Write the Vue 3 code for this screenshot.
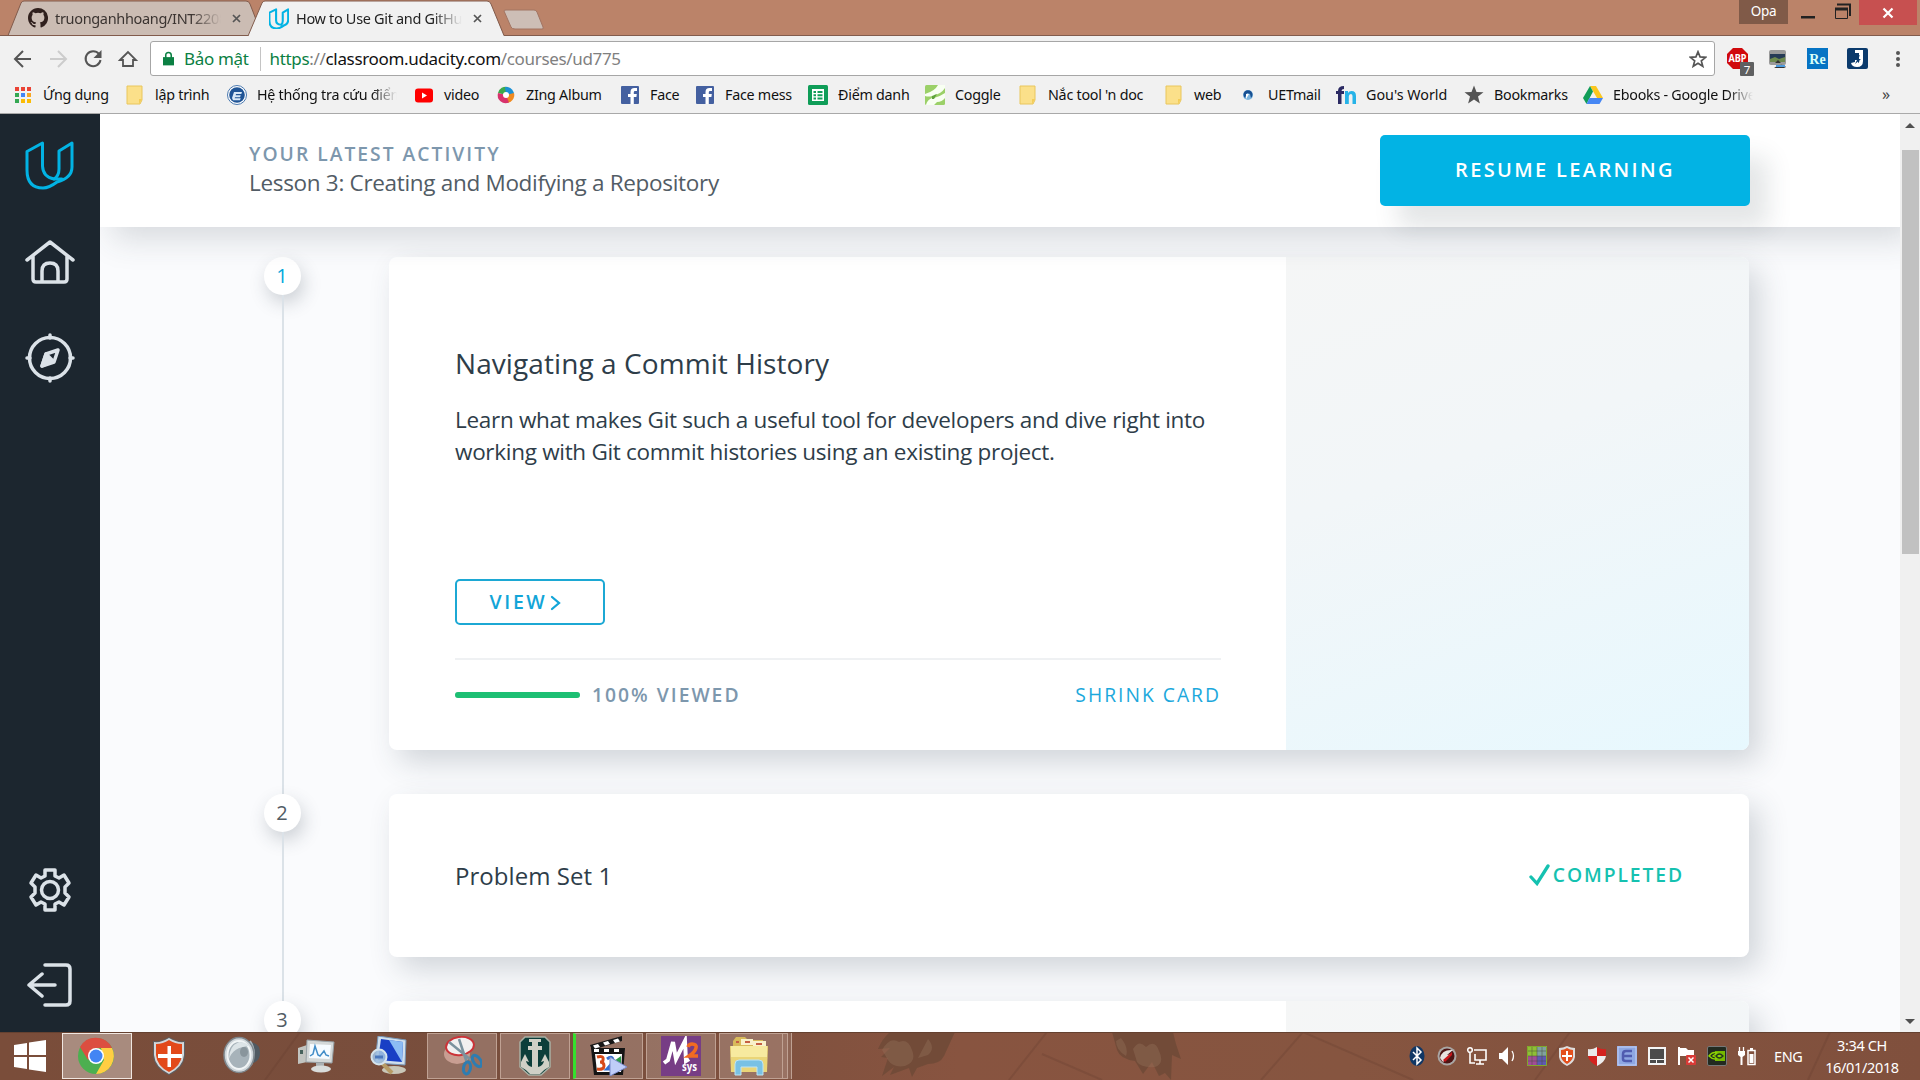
<script setup>
const folder = '<path d="M2 1h15v14l-2 4H2z" fill="#fbe08a" stroke="#e9c65c"/><path d="M14 19v-5h3z" fill="#f4cd58"/>'
const facebook = '<rect x="1" y="1" width="18" height="18" rx="1" fill="#4460a0"/><path d="M10.500 19v-7H8V9h2.500V7q0-4 4-4H17v3h-2q-1.200 0-1.200 1.200V9h3l-.4 3h-2.600v7z" fill="#fff"/>'
const dots = ['#ea4335', '#ea4335', '#ea4335', '#34a853', '#4285f4', '#f6a623', '#34a853', '#fbbc05', '#fbbc05']
  .map((c, i) => `<rect x="${2 + (i % 3) * 6}" y="${2 + Math.floor(i / 3) * 6}" width="4" height="4" fill="${c}"/>`)
  .join('')

const bookmarks = [
  { label: 'Ứng dụng', width: 112, icon: dots },
  { label: 'lập trình', width: 102, icon: folder },
  { label: 'Hệ thống tra cứu điểm', width: 187, fade: true, icon: '<circle cx="10" cy="10" r="9.500" fill="#fff" stroke="#4a79b0"/><circle cx="10" cy="10" r="7.800" fill="#1f5496"/><path d="M5 13l2-6h8l-.7 2H9l-.3 1.200h5l-.6 2H8l-.3 1h6l-.7 2H6z" fill="#d8e8f8"/>' },
  { label: 'video', width: 82, icon: '<rect x="1" y="3.500" width="18" height="14" rx="3" fill="#f00"/><path d="M8 7.500v6l5-3z" fill="#fff"/>' },
  { label: 'ZIng Album', width: 124, icon: '<path d="M10 10L2 8A8 8 0 0 1 12 2z" fill="#3ea94a"/><path d="M10 10L9 2a8 8 0 0 1 9 9z" fill="#1b91d6"/><path d="M10 10l8-2a8 8 0 0 1-8 10z" fill="#f08a20"/><path d="M10 10l3 7.500A8 8 0 0 1 2 8z" fill="#d8326c"/><circle cx="10" cy="10" r="3" fill="#fff"/>' },
  { label: 'Face', width: 75, icon: facebook },
  { label: 'Face mess', width: 113, icon: facebook },
  { label: 'Điểm danh', width: 117, icon: '<rect width="20" height="20" rx="1.500" fill="#0f9d58"/><path d="M4 4h12v12H4z" fill="#fff"/><path d="M5.500 6h2.500v2H5.500zm4 0h5v2h-5zM5.500 9.200h2.500v2H5.500zm4 0h5v2h-5zM5.500 12.400h2.500v2H5.500zm4 0h5v2h-5z" fill="#0f9d58"/>' },
  { label: 'Coggle', width: 93, icon: '<rect width="20" height="20" rx="1.500" fill="#9bd068"/><path d="M0 9Q10 6 13 0h7v3Q16 9 9 10v3q5-1 11-5v5q-3 4-8 4l-3 3H1q1-5 6-7v-2q-3 1-7 0z" fill="#f8fff2"/><path d="M7 11l5-2-3 5H7z" fill="#5fa33c"/>' },
  { label: "Nắc tool 'n doc", width: 146, icon: folder },
  { label: 'web', width: 74, icon: folder },
  { label: 'UETmail', width: 98, icon: '<circle cx="10" cy="10" r="5" fill="#7bb5df"/><path d="M7 13a4.500 4.500 0 1 1 6 0l-1-4-3-1z" fill="#174f91"/><path d="M8 14V9h3z" fill="#fff"/>' },
  { label: "Gou's World", width: 128, wide: true, icon: '<path d="M2 19V9H0V6h2q0-5 6-5v3Q5.500 4 5.500 6H8v3H5.500v10z" fill="#2b2a63"/><path d="M9 19V6h3v2q1-2 3.500-2Q20 6 20 11v8h-3.500v-8q0-2-1.700-2-2 0-2 2.500V19z" fill="#26b3e8"/>' },
  { label: 'Bookmarks', width: 119, icon: '<path d="M10 .5l2.500 6.500 7 .3-5.500 4.300 1.900 6.900-5.900-4-5.900 4 1.900-6.900L.5 7.300l7-.3z" fill="#545454"/>' },
  { label: 'Ebooks - Google Drive', width: 170, fade: true, icon: '<path d="M7 1h6l7 12h-6z" fill="#fbc71f"/><path d="M7 1l3 5.500L3.500 19 0 13z" fill="#109d58"/><path d="M6.500 13H20l-3.500 6h-13z" fill="#4687f4"/>' },
]

const extensions = [
  { name: 'abp', icon: '<path d="M6 0h9l6 6v9l-6 6H6l-6-6V6z" fill="#d0090c"/><text x="1.500" y="14" font-size="10" font-weight="700" fill="#fff" textLength="18" lengthAdjust="spacingAndGlyphs">ABP</text><rect x="13" y="14" width="14" height="14" rx="1" fill="#5f6061"/><text x="20" y="25.500" font-size="11.500" text-anchor="middle" fill="#fff">7</text>' },
  { name: 'capture', icon: '<rect x="2" y="2" width="17" height="15" rx="2" fill="#9a9a9a"/><path d="M3 6h15v8H3z" fill="#263b56"/><path d="M3 11l5-2 4 2 6-2v5H3z" fill="#6d8a4e"/><path d="M8 15l3-3 3 3zM7 20q8-6 12-1l-2 1z" fill="#333"/><path d="M9 18h9" stroke="#4c9ce0" stroke-width="2"/>' },
  { name: 're', icon: '<rect x="0" y="0" width="21" height="21" fill="#0674c4"/><text x="10.500" y="15.500" font-size="14" font-family="Liberation Serif" font-weight="700" text-anchor="middle" fill="#d8fff8">Re</text>' },
  { name: 'j', icon: '<rect x="0" y="0" width="21" height="21" rx="2" fill="#0b3a6c"/><path d="M8 2h8v11q0 6-6 6-5 0-6-4l4-1v-2l3-1v4q2-1 1-4V5H8z" fill="#fff"/><path d="M8 10l5-3-2 4h3l-6 5 2-4H7z" fill="#0b3a6c"/>' },
]

const lessons = [
  { number: 1, kind: 'expanded', title: 'Navigating a Commit History', text: 'Learn what makes Git such a useful tool for developers and dive right into working with Git commit histories using an existing project.', viewed: 100 },
  { number: 2, kind: 'compact', title: 'Problem Set 1' },
  { number: 3, kind: 'preview' },
]

const pinned = [
  { name: 'shield', icon: '<path d="M20 1q-8 5-16 4v14q1 13 16 20 15-7 16-20V5q-8 1-16-4z" fill="#5d6064"/><path d="M20 2q-8 5-15 4v13q1 12 15 19 14-7 15-19V6q-7 1-15-4z" fill="#d5d8da"/><path d="M20 4q-6 4-13 4v11q1 11 13 17 12-6 13-17V8q-7 0-13-4z" fill="#e2491a"/><path d="M18.500 10h3.500v8h11v4H22v9h-3.500v-9H9v-4h9.500z" fill="#fff"/>' },
  { name: 'volume', icon: '<path d="M19 2l13 5q6 2 6 10t-7 10l-12 9z" fill="#505a62"/><path d="M28 5q7 10 1 24" fill="none" stroke="#a9b5bb" stroke-width="2"/><ellipse cx="17" cy="19" rx="15" ry="17.500" fill="#cfd6da" stroke="#7e878d" stroke-width="1.500"/><ellipse cx="17" cy="19" rx="11.500" ry="14" fill="#a7b3ba" stroke="#f1f5f6" stroke-width="2"/><path d="M7 23q4-12 20-13-3-4-10-4-10 4-10 17z" fill="#dce4e7"/><ellipse cx="22" cy="16" rx="4" ry="5" fill="#89959c"/>' },
  { name: 'monitor', icon: '<path d="M2 12l9-3v17l-9 2z" fill="#c2c4c0"/><path d="M4 14h3v4H4z" fill="#46615b"/><path d="M11 4l27 2-2 21-26-1z" fill="#d4d8d8" stroke="#96a0a5"/><path d="M14 8l21 1-1.500 14L13 22z" fill="#f6fbff"/><path d="M14 20l3-2 2-8 3 9 2 1 4-5 2 4 3 1" fill="none" stroke="#428dc8" stroke-width="1.500"/><path d="M20 27h8v5h-8z" fill="#abb0b2"/><ellipse cx="25" cy="33" rx="10" ry="3.500" fill="#d9dcdb"/>' },
  { name: 'remote', icon: '<path d="M9 0l28 4-1 25-30-2z" fill="#d0e0ee" stroke="#7896b5"/><path d="M12 3l22 3-1 20-24-2z" fill="#183fc5"/><path d="M20 4l14 2-1 20z" fill="#8cbcf4"/><ellipse cx="25" cy="34" rx="12" ry="4" fill="#c9c7b8"/><path d="M11 25l12 12" stroke="#b79c66" stroke-width="4"/><circle cx="10" cy="21" r="7.500" fill="#9fbfe0" fill-opacity=".9" stroke="#d6e4ec" stroke-width="2"/><path d="M6 21h8" stroke="#4b78bd" stroke-width="3"/>' },
]

const windows = [
  { name: 'snip', icon: '<ellipse cx="15" cy="18" rx="13" ry="10" fill="#c89e92"/><ellipse cx="18" cy="10" rx="14" ry="9" fill="#f1f0f0" stroke="#cb3338" stroke-width="2" transform="rotate(-8 18 10)"/><path d="M7 6l22 18M17 3l8 24" stroke="#7b929e" stroke-width="2.500"/><ellipse cx="35" cy="25" rx="3.500" ry="6.500" transform="rotate(-35 35 25)" fill="none" stroke="#2d7db2" stroke-width="3"/><ellipse cx="25" cy="32" rx="3.500" ry="6" transform="rotate(10 25 32)" fill="none" stroke="#2d7db2" stroke-width="3"/>' },
  { name: 'anchor', icon: '<path d="M10 1h20l5 5v25l-9 8H14l-9-8V6z" fill="#0c3e3a" stroke="#a9b0a4" stroke-width="1.500"/><path d="M14 3h12v3h-3v4h4v4h-4v17q5-1 6-6l-3 1 4-8 4 8v5q-6 3-9 7h-10q-3-4-9-7v-5l4-8 4 8-3-1q1 5 6 6V14h-4v-4h4V6h-3z" fill="#cfd0c6"/>' },
  { name: 'player', active: true, icon: '<path d="M2 12h34l-2 27H5z" fill="#151515"/><path d="M6 18h27l-1 18H8z" fill="#fff"/><path d="M1 9L33 0v5L3 14z" fill="#181818"/><path d="M4 9.500l5-1.500 2 3-5 1.500zM14 6.500l5-1.500 2 3-5 1.500zM24 4l5-1.500 2 3L26 7zM5 13h5v3H5zm10 0h5v3h-5zm10 0h5v3h-5z" fill="#fff"/><path d="M8 21q7-2 6 3 0 2-3 2 4 0 4 4 0 4-7 3" fill="none" stroke="#d74a19" stroke-width="3"/><path d="M18 23q5-4 6 1 0 3-6 9h7" fill="none" stroke="#356fd0" stroke-width="3"/><path d="M25 25l7-5v10z" fill="#2a9b47"/><path d="M21 21l17 10-17 9z" fill="#bfcdf8" stroke="#7c8bc9"/>' },
  { name: 'm2', icon: '<rect width="40" height="40" fill="#773d85"/><path d="M3 27l4-3 5-18 3 17L24 5l1 20 3-2" fill="none" stroke="#fff" stroke-width="4"/><path d="M27 11q1-3 4-3 5 0 4 4-1 4-7 8h9" fill="none" stroke="#f26b21" stroke-width="3.500"/><text x="21" y="35" font-size="12" font-weight="700" fill="#fff" textLength="15" lengthAdjust="spacingAndGlyphs">sys</text>' },
  { name: 'explorer', stacked: true, icon: '<path d="M4 5l3-4h9l3 3h15v8H4z" fill="#d8ba5a"/><path d="M12 3h12v6H12zm12 2h13v5H24z" fill="#f9f1ca"/><path d="M7 6h3m6 0h5m6 2h6" stroke="#c65f43" stroke-width="2"/><path d="M1 10h38l-1 26H2z" fill="#ead577"/><path d="M2 10h36v11H2z" fill="#f7ea9f"/><path d="M6 39V28q0-4 4-4h20q4 0 4 4v11h-6v-8H12v8z" fill="#79c1e4" stroke="#bfe4f4"/>' },
]

const tray = [
  '<ellipse cx="10" cy="10" rx="7.500" ry="10" fill="#103765"/><path d="M6 6l8 8-4 4V2l4 4-8 8" fill="none" stroke="#fff" stroke-width="1.500"/>',
  '<circle cx="10" cy="10" r="9.500" fill="#a9a6a4"/><circle cx="10" cy="10" r="7.500" fill="#4d1514"/><path d="M3 12Q5 3 16 4l-6 5 5-1-9 8z" fill="#e8e2e0"/><path d="M6 14L15 6v3l-7 7z" fill="#c8171c"/>',
  '<path d="M7 4h12v10H8V8M13 14v4m-4 0h8M3 7v10h5" fill="none" stroke="#fff" stroke-width="1.600"/><circle cx="3" cy="4" r="2.300" fill="none" stroke="#fff" stroke-width="1.500"/>',
  '<path d="M2 7h3l6-6v18l-6-6H2z" fill="#fff"/><path d="M15 5q3 5 0 10" fill="none" stroke="#fff" stroke-width="1.300"/>',
  '<path d="M0 0h10v10H0z" fill="#8fbf35"/><path d="M10 0h10v10H10z" fill="#7fa1a0"/><path d="M0 10h10v10H0z" fill="#a14d96"/><path d="M10 10h10v10H10z" fill="#5e59b5"/><path d="M0 5h20M0 10h20M0 15h20M5 0v20M10 0v20M15 0v20" stroke="#4d4d3e" stroke-width=".5"/><path d="M.5.5h19v19H.5z" fill="none" stroke="#7fa82c"/>',
  '<path d="M10 0Q6 2 2 2v9q1 6 8 9 7-3 8-9V2q-4 0-8-2z" fill="#ddd"/><path d="M10 2Q7 4 4 4v7q1 4 6 7 5-3 6-7V4q-3 0-6-2z" fill="#e4501d"/><path d="M9 5h2v4h4v2h-4v4H9v-4H5V9h4z" fill="#fff"/>',
  '<path d="M10 1Q5 4 1 3v7h9z" fill="#e9e9e9"/><path d="M10 1q5 3 9 2v7h-9z" fill="#d4231f"/><path d="M1 10q1 6 9 10V10z" fill="#d4231f"/><path d="M19 10q-1 6-9 10V10z" fill="#eee"/>',
  '<rect width="20" height="20" fill="#8ea7e3"/><rect x="1" y="1" width="18" height="18" fill="none" stroke="#c1cff4"/><path d="M15 5H9q-3 0-3 3v5q0 2 3 2h6M6 10h9" fill="none" stroke="#505cb0" stroke-width="2.500"/>',
  '<rect x="1" y="1" width="18" height="18" fill="#f4f4f4"/><path d="M3 3h14v10H3zm0 11h6v3H3zm7 0h7v3h-7z" fill="#4c4b4b"/>',
  '<path d="M2 1v18" stroke="#fff" stroke-width="2"/><path d="M3 2h6l2 2h6v8h-6L9 10H3z" fill="#fff"/><rect x="9" y="9" width="10" height="10" rx="1" fill="#d93b37"/><path d="M11.500 11.500l5 5m0-5l-5 5" stroke="#fff" stroke-width="1.500"/>',
  '<rect x=".5" y=".5" width="19" height="19" rx="1.500" fill="#222a20" stroke="#777"/><path d="M8 5h10v10H8z" fill="#76b900"/><path d="M2 10q5-7 12 0-6 6-12 0zm4 0q3-3 6 0-3 2-6 0z" fill="none" stroke="#8dd600" stroke-width="1.500"/><path d="M9 10q3-4 7 0-4 4-7 0z" fill="none" stroke="#24371b" stroke-width="1.300"/>',
  '<path d="M11 4.500h7v14h-7z" fill="none" stroke="#fff" stroke-width="1.500"/><path d="M12.500 8h4v9h-4zM13 2h3v2h-3z" fill="#fff"/><path d="M2.500 1v5m4-5v5" stroke="#fff" stroke-width="1.300"/><path d="M1 5h7v4l-2.500 2v8h-2v-8L1 9z" fill="#fff"/>',
]
</script>

<template>
  <div class="screen">
    <header class="browser">
      <div class="tabstrip">
        <svg class="tab-shapes" width="560" height="36" viewBox="0 0 560 36">
          <path d="M0 35.500h8L21 3q1-2 3-2h222q3 0 4 3l7 18-6 13.500z" fill="#cbbcb3" stroke="#815b4c" />
          <path d="M248 36l14-33q1-2 3-2h222q3 0 4 3l13 32z" fill="#f1f1f1" />
          <path d="M248 36l14-33q1-2 3-2h222q3 0 4 3l13 31.500h60" fill="none" stroke="#815b4c" />
          <path d="M504 11q0-1 2-1h28q2 0 3 2l6 15q1 2-1 2h-27q-3 0-4-2z" fill="#cdbeb6" stroke="#a27462" />
        </svg>
        <div class="tab first">
          <svg width="20" height="20" viewBox="0 0 16 16"><path fill="#30201d" d="M8 0C3.580 0 0 3.580 0 8c0 3.540 2.290 6.530 5.470 7.590.4.070.55-.17.55-.38v-1.490c-2.230.48-2.700-.94-2.700-.94-.36-.92-.89-1.170-.89-1.170-.73-.5.050-.49.050-.49.8.060 1.230.83 1.230.83.72 1.230 1.880.87 2.340.66.070-.52.280-.87.500-1.070-1.780-.2-3.640-.89-3.640-3.950 0-.87.310-1.590.82-2.150-.08-.2-.36-1.020.080-2.120 0 0 .67-.21 2.200.82a7.600 7.600 0 0 1 4 0c1.530-1.040 2.200-.82 2.200-.82.440 1.100.16 1.920.080 2.120.51.560.82 1.270.82 2.150 0 3.070-1.870 3.750-3.650 3.950.29.250.54.730.54 1.480v2.190c0 .21.150.46.550.38A8 8 0 0 0 8 0z" /></svg>
          <span class="tab-title">truonganhhoang/INT2208</span>
          <svg class="close" width="9" height="9" viewBox="0 0 9 9"><path d="M1 1l7 7m0-7L1 8" /></svg>
        </div>
        <div class="tab second">
          <svg width="20" height="21" viewBox="0 0 48 48"><path class="udacity heavy" d="M17 2v26q0 10 12 11 4-3 4-9V10L46 2v25q0 10-9 13-10 8-19 8Q1 47 1 30V10L17 2z" /></svg>
          <span class="tab-title">How to Use Git and GitHub</span>
          <svg class="close" width="9" height="9" viewBox="0 0 9 9"><path d="M1 1l7 7m0-7L1 8" /></svg>
        </div>
        <div class="window-controls">
          <span class="profile">Opa</span>
          <svg class="controls" width="71" height="24" viewBox="0 0 71 24"><path d="M13 16h14v2.500H13z" fill="#222" /><path d="M47.500 8.500h12v10h-12z" fill="none" stroke="#222" /><path d="M47 7.500h13v3H47z" fill="#222" /><path d="M49 4.500h13V16" fill="none" stroke="#222" stroke-width="2" /></svg>
          <span class="window-close"><svg width="12" height="12" viewBox="0 0 12 12"><path d="M1.500 1.500l9 9m0-9l-9 9" stroke="#fff" stroke-width="2.200" /></svg></span>
        </div>
      </div>

      <div class="toolbar">
        <svg class="nav" width="150" height="42" viewBox="0 0 150 42">
          <g fill="none" stroke="#555" stroke-width="2">
            <path d="M31 23H16m7-8l-8 8 8 8" />
            <path d="M50 23h15m-7-8l8 8-8 8" stroke="#ccc" />
            <path d="M99 18a7.500 7.500 0 1 0 1.500 6" />
            <path d="M120 24l8-8 8 8h-3v6h-10v-6z" stroke-width="1.800" />
          </g>
          <path d="M101.500 14v8h-8z" fill="#555" />
        </svg>
        <div class="omnibox">
          <svg width="11" height="15" viewBox="0 0 12 15"><path d="M0 6h12v9H0z" fill="#0b8043" /><path d="M3 7V4q0-3 3-3t3 3v3" fill="none" stroke="#0b8043" stroke-width="1.700" /></svg>
          <span class="secure">Bảo mật</span>
          <span class="url"><b>https</b>://<i>classroom.udacity.com</i>/courses/ud775</span>
          <svg class="star" width="18" height="18" viewBox="0 0 20 20"><path d="M10 2l2.300 5.700 6.200.4-4.800 4 1.600 6L10 14.700 4.700 18.100l1.600-6-4.800-4 6.200-.4z" fill="none" stroke="#555" stroke-width="1.900" /></svg>
        </div>
        <div class="extensions">
          <svg v-for="item in extensions" :key="item.name" width="28" height="28" viewBox="0 0 28 28" v-html="item.icon" />
          <svg class="menu" width="6" height="20" viewBox="0 0 6 20"><circle cx="3" cy="4" r="2" /><circle cx="3" cy="10" r="2" /><circle cx="3" cy="16" r="2" /></svg>
        </div>
      </div>

      <nav class="bookmarks">
        <div v-for="item in bookmarks" :key="item.label" class="bookmark" :class="{ wide: item.wide }" :style="{ width: item.width + 'px' }">
          <svg width="20" height="20" viewBox="0 0 20 20" v-html="item.icon" />
          <span :class="{ fade: item.fade }">{{ item.label }}</span>
        </div>
        <span class="more">»</span>
      </nav>
    </header>

    <div class="viewport">
      <aside class="sidebar">
        <svg class="logo" width="50" height="50" viewBox="0 0 50 50"><path class="udacity" d="M17.500 2L2 10.500V29q0 18 16 18 6 0 14-6 15-4 15-15V2L34 10v18q0 7-5 10-11-2-11.500-13z" /><path class="udacity" d="M29 38q5 0 8 0" /></svg>
        <svg class="home" width="50" height="44" viewBox="0 0 50 44"><path d="M2 20L25 2l23 18M8 16v23q0 3 3 3h28q3 0 3-3V16M17 41V31q0-8 8-8t8 8v10" /></svg>
        <svg class="compass" width="50" height="50" viewBox="0 0 50 50"><circle cx="25" cy="25" r="20.500" /><path d="M25 2v3m0 40v3M2 25h3m40 0h3" /><path d="M17 33l4-12 12-4-4 12z" /><path d="M17 33l4-12 7 7z" class="solid" /></svg>
        <span class="spacer"></span>
        <svg class="gear" width="44" height="44" viewBox="0 0 44 44"><circle cx="22" cy="22" r="8.500" /><path d="M17 2h10v6l4 2 5-3 5 8-4 4v6l4 4-5 8-5-3-4 2v6H17v-6l-4-2-5 3-5-8 4-4v-6l-4-4 5-8 5 3 4-2z" /></svg>
        <svg class="logout" width="46" height="46" viewBox="0 0 46 46"><path d="M18 3h21q4 0 4 4v32q0 4-4 4H18M28 23H2m13-11L2 23l13 11" /></svg>
      </aside>

      <main class="content">
        <section class="activity">
          <div class="latest">
            <p class="eyebrow">Your latest activity</p>
            <p class="lesson">Lesson 3: Creating and Modifying a Repository</p>
          </div>
          <button class="resume">Resume Learning</button>
        </section>

        <section class="timeline">
          <article v-for="lesson in lessons" :key="lesson.number" class="row">
            <div class="rail">
              <span class="step" :class="{ current: lesson.number === 1 }">{{ lesson.number }}</span>
              <span class="line"></span>
            </div>
            <div class="card" :class="lesson.kind">
              <template v-if="lesson.kind === 'expanded'">
                <div class="details">
                  <h2>{{ lesson.title }}</h2>
                  <p class="summary">{{ lesson.text }}</p>
                  <button class="view">View<svg width="12" height="16" viewBox="0 0 12 16"><path d="M2 2l7 6-7 6" fill="none" stroke="currentColor" stroke-width="2.300" stroke-linecap="round" /></svg></button>
                  <footer>
                    <span class="track"><span class="bar" :style="{ width: lesson.viewed + '%' }"></span></span>
                    <span class="viewed">{{ lesson.viewed }}% viewed</span>
                    <a class="shrink">Shrink card</a>
                  </footer>
                </div>
                <div class="art"></div>
              </template>
              <template v-else-if="lesson.kind === 'compact'">
                <h3>{{ lesson.title }}</h3>
                <span class="completed"><svg width="22" height="22" viewBox="0 0 22 22"><path d="M3 13l6 6.500L20 2" fill="none" stroke="currentColor" stroke-width="3.300" stroke-linecap="round" /></svg>Completed</span>
              </template>
              <template v-else>
                <div class="details"></div>
                <div class="art"></div>
              </template>
            </div>
          </article>
        </section>
      </main>

      <div class="scrollbar">
        <svg width="10" height="6" viewBox="0 0 10 6"><path d="M0 6l5-5 5 5z" /></svg>
        <span class="thumb"></span>
        <svg class="down" width="10" height="6" viewBox="0 0 10 6"><path d="M0 0l5 5 5-5z" /></svg>
      </div>
    </div>

    <footer class="taskbar">
      <svg class="wallpaper" width="1920" height="48" viewBox="0 0 1920 48">
        <g fill="none" stroke="#663c2e" stroke-opacity=".28" stroke-width="2"><path d="M300 0l-35 48M1047 0l-38 48M1042 22l60 26M1303 0l-42 48M1303 0l110 48M1570 0l-35 48M1830 0l-22 48" /></g>
        <g fill="#6f4a37" fill-opacity=".85"><path d="M890 0h65l-11 24q-4 8-16 8l-11 4-5 9-3-9-19 7 4-8-12 9 6-18-7-1 9-9-12 1q4-10 12-17z" /><path d="M1112 0h61l3 12 5 15-9-4-1 25-6-7-6 3-7-14-9 12-8-13q-15-2-18-11z" /></g>
        <g fill="#94705b" fill-opacity=".4"><path d="M882 18q8-14 17-8 9-4 13 8 5 12-7 16-12 2-17-6zM928 7q8 9 0 16l-10 3zM1121 6q8 10 5 18-10-6-10-15zM1133 17q6-10 13-2 9-8 13 4 6 12-4 16-14 1-18-5z" /></g>
        <path d="M0 .5h1920" stroke="#654130" />
      </svg>
      <svg class="start" width="34" height="34" viewBox="0 0 34 34"><path d="M1 6l13-2v12H1zM16 3.500L33 1v15H16zM1 18h13v12L1 28zM16 18h17v15l-17-2.500z" fill="#fff" /></svg>
      <span class="task chrome"><svg width="38" height="38" viewBox="0 0 38 38"><circle cx="19" cy="19" r="18" fill="#4caf50" /><path d="M3 10a18 18 0 0 1 32 1H19l-8 12z" fill="#dc4e40" /><path d="M35 11a18 18 0 0 1-16 26l8-14-3-12z" fill="#ffce43" /><circle cx="19" cy="19" r="8" fill="#fff" /><circle cx="19" cy="19" r="6.500" fill="#4285f4" /></svg></span>
      <span v-for="item in pinned" :key="item.name" class="pinned"><svg width="40" height="40" viewBox="0 0 40 40" v-html="item.icon" /></span>
      <span v-for="item in windows" :key="item.name" class="task" :class="{ active: item.active, stacked: item.stacked }"><svg width="40" height="40" viewBox="0 0 40 40" v-html="item.icon" /></span>
      <div class="tray">
        <svg v-for="(icon, index) in tray" :key="index" width="20" height="20" viewBox="0 0 20 20" v-html="icon" />
        <span class="language">ENG</span>
        <div class="clock"><span>3:34 CH</span><span>16/01/2018</span></div>
      </div>
    </footer>
  </div>
</template>

<style>
html,
body {
  overflow: hidden;
}
</style>

<style scoped>
* {
  box-sizing: border-box;
}

p,
h2,
h3 {
  margin: 0;
  font-weight: 400;
}

svg {
  flex: none;
}

.screen {
  display: flex;
  flex-direction: column;
  width: 1920px;
  height: 1080px;
  overflow: hidden;
  font-family: 'Open Sans', 'Noto Sans', sans-serif;
}

.browser {
  flex: none;
  height: 114px;
  background: #f1f1f1;
  border-bottom: 1px solid #a9a9a9;
  font-family: 'Noto Sans', 'Open Sans', sans-serif;
}

.tabstrip {
  position: relative;
  display: flex;
  height: 36px;
  background: #bb8369;
  border-bottom: 1px solid #815b4c;
}

.tab-shapes {
  position: absolute;
  left: 0;
  top: 0;
}

.tab {
  position: relative;
  display: flex;
  align-items: center;
  height: 36px;
  font-size: 14.5px;
  letter-spacing: -0.33px;
}

.first {
  width: 241px;
  margin-left: 28px;
  color: #3b3431;
}

.second {
  width: 235px;
  color: #222;
}

.tab-title {
  width: 166px;
  margin: 0 11px 0 7px;
  overflow: hidden;
  white-space: nowrap;
  -webkit-mask-image: linear-gradient(90deg, #000 82%, transparent);
  mask-image: linear-gradient(90deg, #000 82%, transparent);
}

.close {
  fill: none;
  stroke: #555;
  stroke-width: 1.7;
}

.udacity {
  fill: none;
  stroke: #02b3e4;
  stroke-width: 3;
  stroke-linejoin: round;
}

.heavy {
  stroke-width: 5;
}

.sidebar .udacity {
  stroke: #02b3e4;
  stroke-width: 3;
}

.window-controls {
  display: flex;
  margin-left: auto;
  padding-right: 3px;
}

.profile {
  width: 49px;
  height: 24px;
  background: #805a48;
  color: #fff;
  font-size: 13.5px;
  line-height: 23px;
  text-align: center;
  letter-spacing: -0.3px;
}

.window-close {
  display: flex;
  align-items: center;
  justify-content: center;
  width: 58px;
  height: 25px;
  background: #c75050;
}

.toolbar {
  display: flex;
  align-items: flex-start;
  height: 42px;
}

.omnibox {
  display: flex;
  align-items: center;
  width: 1565px;
  height: 35px;
  margin-top: 5px;
  padding: 0 7px 0 12px;
  background: #fff;
  border: 1px solid #a6a6a6;
  border-radius: 3px;
  font-size: 17px;
  letter-spacing: -0.33px;
}

.secure {
  margin-left: 10px;
  padding-right: 11px;
  border-right: 1px solid #c4c4c4;
  color: #0b8043;
  line-height: 24px;
}

.url {
  margin-left: 9px;
  color: #808080;
}

.url b {
  color: #0b8043;
  font-weight: 400;
}

.url i {
  color: #111;
  font-style: normal;
}

.star {
  margin-left: auto;
}

.extensions {
  display: flex;
  gap: 12px;
  padding: 12px 0 0 12px;
}

.menu {
  margin: 1px 0 0 8px;
  fill: #555;
}

.bookmarks {
  display: flex;
  align-items: center;
  height: 34px;
  padding-left: 13px;
}

.bookmark {
  display: flex;
  flex: none;
  align-items: center;
  gap: 10px;
  color: #111;
  font-size: 14.3px;
  line-height: 20px;
  letter-spacing: -0.25px;
  white-space: nowrap;
}

.bookmark span {
  margin-top: -1px;
}

.wide {
  letter-spacing: 0;
}

.fade {
  width: 140px;
  overflow: hidden;
  -webkit-mask-image: linear-gradient(90deg, #000 82%, transparent);
  mask-image: linear-gradient(90deg, #000 82%, transparent);
}

.more {
  margin-top: -3px;
  margin-left: 129px;
  color: #444;
  font-size: 16px;
}

.viewport {
  display: flex;
  flex: 1;
  min-height: 0;
}

.sidebar {
  display: flex;
  flex: none;
  flex-direction: column;
  align-items: center;
  width: 100px;
  padding: 27px 0 24px;
  background: #1c262f;
}

.sidebar svg {
  fill: none;
  stroke: #dbe2e8;
  stroke-width: 3.5;
  stroke-linecap: round;
  stroke-linejoin: round;
}

.sidebar .home {
  margin-top: 49px;
}

.sidebar .compass {
  margin-top: 49px;
}

.sidebar .solid {
  fill: #dbe2e8;
}

.spacer {
  flex: 1;
}

.sidebar .logout {
  margin-top: 50px;
}

.content {
  display: flex;
  flex: 1;
  flex-direction: column;
  min-width: 0;
  overflow: hidden;
  background: #fafbfd;
}

.activity {
  z-index: 0;
  display: flex;
  flex: none;
  align-items: flex-start;
  justify-content: space-between;
  height: 113px;
  padding: 21px 150px 0 149px;
  background: #fff;
  box-shadow: 12px 12px 30px rgba(46, 61, 73, 0.17);
}

.latest {
  padding-top: 5px;
}

.eyebrow {
  color: #7d97ad;
  font-size: 19.3px;
  font-weight: 600;
  line-height: 27px;
  letter-spacing: 2px;
  text-transform: uppercase;
}

.lesson {
  margin-top: 1px;
  color: #525c65;
  font-size: 22.5px;
  line-height: 30px;
  letter-spacing: -0.31px;
}

button {
  font-family: inherit;
  font-weight: 600;
  text-transform: uppercase;
}

.resume {
  width: 370px;
  height: 71px;
  padding: 0 0 2px;
  background: #02b3e4;
  border: 0;
  border-radius: 5px;
  box-shadow: 18px 22px 25px rgba(46, 61, 73, 0.13);
  color: #fff;
  font-size: 20px;
  letter-spacing: 2.35px;
}

.timeline {
  display: flex;
  flex-direction: column;
  padding: 30px 151px 0 163px;
}

.row {
  display: flex;
  gap: 88px;
}

.rail {
  display: flex;
  flex: none;
  flex-direction: column;
  align-items: center;
  width: 38px;
}

.step {
  width: 37px;
  height: 38px;
  background: #fff;
  border-radius: 50%;
  box-shadow: 3px 8px 18px rgba(46, 61, 73, 0.22);
  color: #525c65;
  font-size: 20px;
  font-weight: 500;
  line-height: 38px;
  text-align: center;
}

.current {
  color: #02a8dc;
}

.line {
  flex: 1;
  width: 2px;
  margin-left: 2px;
  background: #dbe2e8;
}

.card {
  display: flex;
  flex: 1;
  margin-bottom: 44px;
  background: #fff;
  border-radius: 8px;
  box-shadow: 10px 12px 30px rgba(46, 61, 73, 0.2);
}

.expanded {
  height: 493px;
}

.compact {
  align-items: center;
  justify-content: space-between;
  height: 163px;
  padding: 0 65px 0 66px;
}

.preview {
  height: 493px;
}

.details {
  display: flex;
  flex-direction: column;
  align-items: flex-start;
  width: 897px;
  padding: 86px 65px 0 66px;
}

.art {
  flex: 1;
  background: linear-gradient(160deg, #f5f6f6 0%, #f2f6f8 40%, #e7f8fe 100%);
  border-radius: 0 8px 8px 0;
}

h2 {
  color: #2e3d49;
  font-size: 28px;
  line-height: 40px;
  letter-spacing: 0.08px;
}

.summary {
  margin-top: 21px;
  color: #2e3d49;
  font-size: 22.5px;
  line-height: 32px;
  letter-spacing: -0.3px;
}

.view {
  display: flex;
  align-items: center;
  justify-content: center;
  gap: 3px;
  width: 150px;
  height: 46px;
  margin-top: 111px;
  padding: 0 8px 2px 0;
  background: #fff;
  border: 2px solid #1ca8d4;
  border-radius: 5px;
  color: #12a5d8;
  font-size: 19.5px;
  letter-spacing: 2.6px;
}

.view svg {
  margin-top: 4px;
}

.details footer {
  display: flex;
  align-items: center;
  width: 766px;
  height: 71px;
  margin-top: 33px;
  border-top: 2px solid #eff1f3;
}

.track {
  width: 125px;
  height: 6px;
  background: #dbe2e8;
  border-radius: 3px;
}

.bar {
  display: block;
  height: 6px;
  background: #1dbf73;
  border-radius: 3px;
}

.viewed {
  margin: 0 0 0 12px;
  color: #7d97ad;
  font-size: 19.3px;
  font-weight: 600;
  letter-spacing: 2px;
  text-transform: uppercase;
}

.shrink {
  margin: 0 0 0 auto;
  color: #1ca8dc;
  font-size: 19.3px;
  letter-spacing: 2px;
  text-transform: uppercase;
}

h3 {
  color: #2e3d49;
  font-size: 24px;
  letter-spacing: 0.05px;
}

.completed {
  display: flex;
  align-items: center;
  gap: 3px;
  padding-bottom: 2px;
  color: #15c1b0;
  font-size: 19.3px;
  font-weight: 600;
  letter-spacing: 1.9px;
  text-transform: uppercase;
}

.scrollbar {
  display: flex;
  flex: none;
  flex-direction: column;
  align-items: center;
  width: 20px;
  padding: 8px 0 7px;
  background: #f0f0f0;
  fill: #505050;
}

.thumb {
  width: 17px;
  height: 404px;
  margin-top: 22px;
  background: #c1c1c1;
}

.down {
  margin-top: auto;
}

.taskbar {
  position: relative;
  display: flex;
  flex: none;
  align-items: center;
  height: 48px;
  padding-left: 13px;
  background: linear-gradient(90deg, #7a4d3a, #784e3d 30%, #885440 50%, #865540 70%, #80503d);
}

.wallpaper {
  position: absolute;
  left: 0;
  top: 0;
}

.start,
.task,
.pinned,
.tray {
  position: relative;
}

.task {
  display: flex;
  align-items: center;
  justify-content: center;
  width: 70px;
  height: 46px;
  margin-right: 3px;
  padding-right: 1px;
  background: rgba(190, 165, 155, 0.4);
  border: 1px solid #bfa193;
}

.chrome {
  margin: 0 2px 0 15px;
  padding-right: 2px;
  background: #a88b7e;
  border-color: #f0e6e0;
}

.pinned {
  display: flex;
  justify-content: center;
  width: 73.3px;
  padding-right: 3px;
}

.active {
  border-left: 3px solid #35e02d;
}

.stacked {
  width: 69px;
  padding-right: 9px;
  box-shadow: 3px 0 0 #8d6555, 4px 0 0 #bfa193;
}

.stacked::after {
  position: absolute;
  top: -1px;
  right: 4px;
  width: 1px;
  height: 46px;
  background: #bfa193;
  content: '';
}

.tray {
  display: flex;
  align-items: center;
  margin-left: auto;
  gap: 10px;
  color: #fff;
  font-family: 'Noto Sans', sans-serif;
}

.language {
  width: 30px;
  margin-left: 7px;
  font-size: 14.5px;
  letter-spacing: -0.4px;
}

.clock {
  display: flex;
  flex-direction: column;
  align-items: center;
  width: 96px;
  margin-right: 10px;
  font-size: 14.5px;
  line-height: 22px;
  letter-spacing: -0.35px;
}
</style>
